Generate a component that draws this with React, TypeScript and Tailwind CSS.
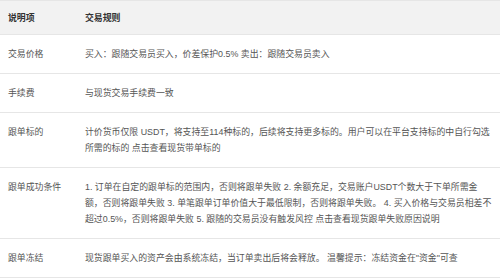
export default function App() {
  const rows: { label: string; content: React.ReactNode }[] = [
    { label: '交易价格', content: '买入：跟随交易员买入，价差保护0.5% 卖出：跟随交易员卖入' },
    { label: '手续费', content: '与现货交易手续费一致' },
    {
      label: '跟单标的',
      content: (
        <>
          计价货币仅限 USDT，将支持至114种标的，后续将支持更多标的。用户可以在平台支持标的中自行勾选所需的标的 <span>点击查看现货带单标的</span>
        </>
      ),
    },
    {
      label: '跟单成功条件',
      content: (
        <>
          1. 订单在自定的跟单标的范围内，否则将跟单失败 2. 余额充足，交易账户USDT个数大于下单所需金额，否则将跟单失败 3. 单笔跟单订单价值大于最低限制，否则将跟单失败。 4. 买入价格与交易员相差不超过0.5%，否则将跟单失败 5. 跟随的交易员没有触发风控 <span>点击查看现货跟单失败原因说明</span>
        </>
      ),
    },
    { label: '跟单冻结', content: '现货跟单买入的资产会由系统冻结，当订单卖出后将会释放。 温馨提示：冻结资金在"资金"可查' },
  ];

  return (
    <div className="w-[500px] h-[278px] bg-white overflow-hidden font-['Liberation_Sans','Noto_Sans_CJK_SC',sans-serif] text-[8.9px] leading-[16px]">
      <table className="w-full border-collapse table-fixed">
        <thead>
          <tr className="bg-[#f2f2f2] border-y border-[#e6e6e6]">
            <th className="w-[85px] h-[34px] pl-2 text-left font-bold text-[#333]">说明项</th>
            <th className="pl-0 pr-[6px] text-left font-bold text-[#333]">交易规则</th>
          </tr>
        </thead>
        <tbody>
          {rows.map((r) => (
            <tr key={r.label} className="border-b border-[#e6e6e6]">
              <td className="pl-2 py-[11px] align-top text-[#555]">{r.label}</td>
              <td className="pr-[6px] py-[11px] align-top text-[#555]">{r.content}</td>
            </tr>
          ))}
        </tbody>
      </table>
    </div>
  );
}
